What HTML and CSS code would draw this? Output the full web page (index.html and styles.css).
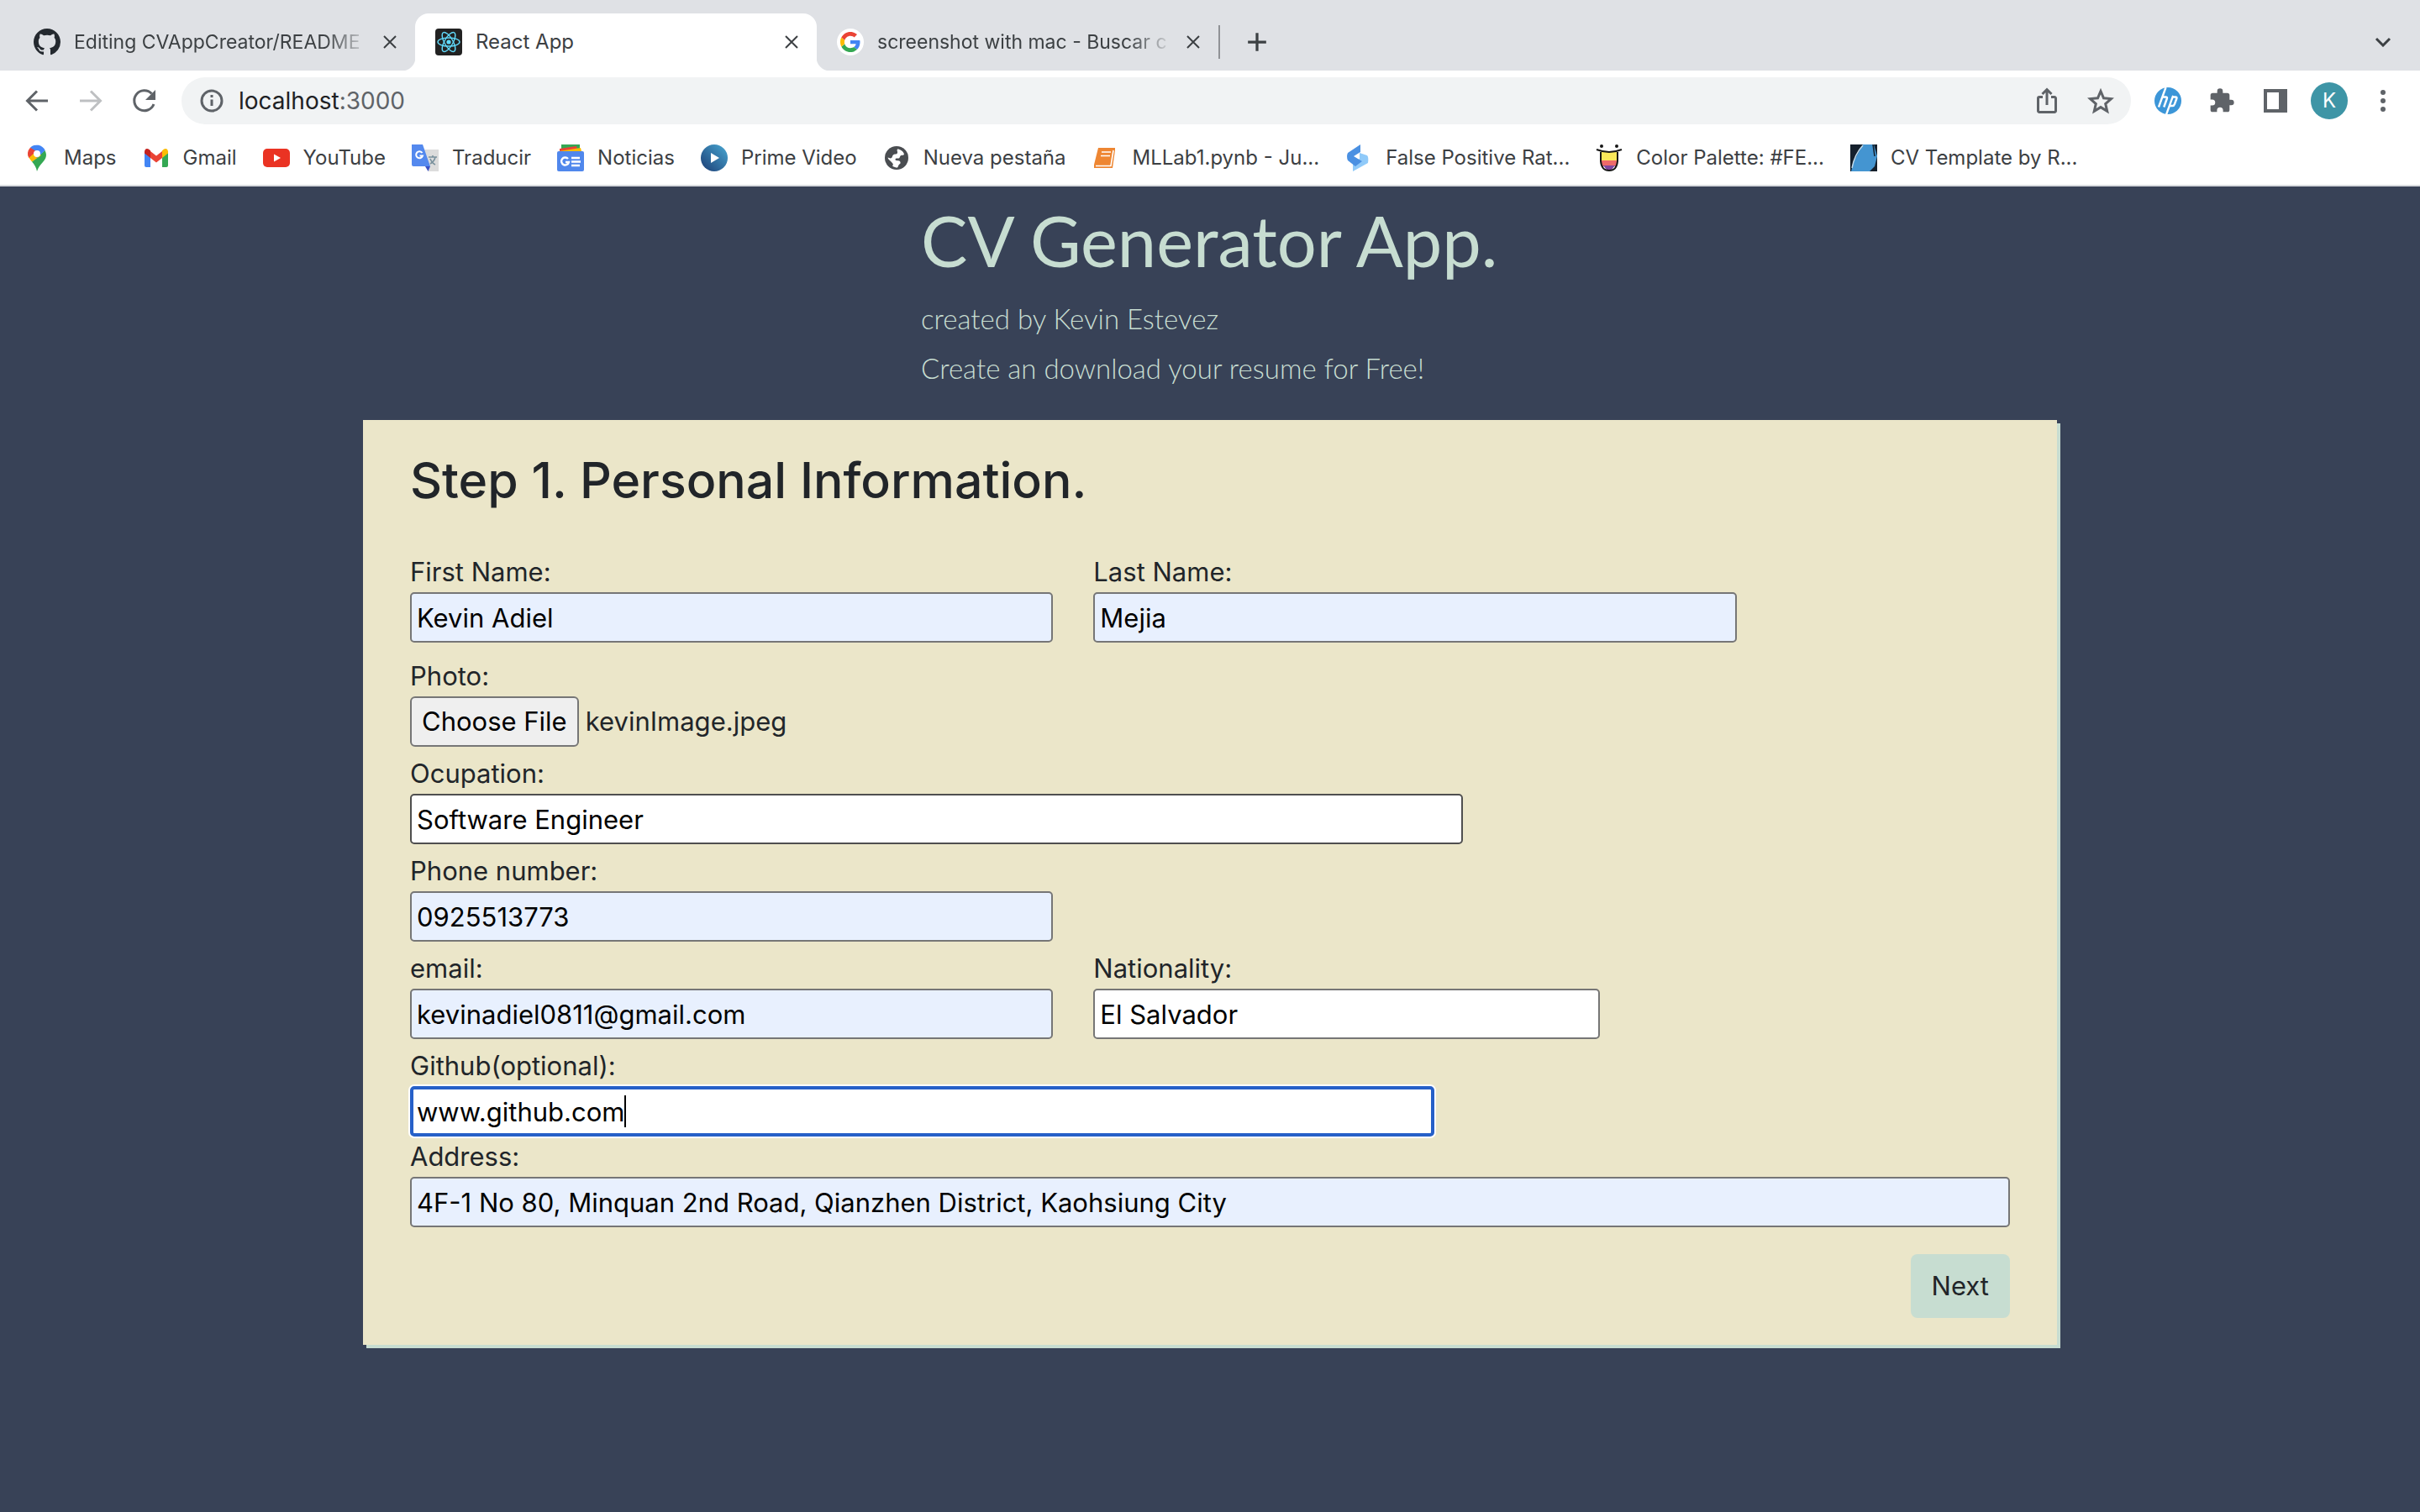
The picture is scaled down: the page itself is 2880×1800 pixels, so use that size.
FILE: index.html
```html
<!DOCTYPE html>
<html lang="en">
<head>
<meta charset="utf-8">
<title>React App</title>
<link rel="stylesheet" href="styles.css">
</head>
<body>
<div class="browser">
  <div class="tabstrip">
    <div class="tab">
      <svg class="icon" viewBox="0 0 16 16"><path fill="#24292f" d="M8 0C3.58 0 0 3.58 0 8c0 3.54 2.29 6.53 5.47 7.59.4.07.55-.17.55-.38 0-.19-.01-.82-.01-1.49-2.01.37-2.53-.49-2.69-.94-.09-.23-.48-.94-.82-1.13-.28-.15-.68-.52-.01-.53.63-.01 1.08.58 1.23.82.72 1.21 1.87.87 2.33.66.07-.52.28-.87.51-1.07-1.78-.2-3.64-.89-3.64-3.95 0-.87.31-1.59.82-2.15-.08-.2-.36-1.02.08-2.12 0 0 .67-.21 2.2.82.64-.18 1.32-.27 2-.27s1.36.09 2 .27c1.53-1.04 2.2-.82 2.2-.82.44 1.1.16 1.92.08 2.12.51.56.82 1.27.82 2.15 0 3.07-1.87 3.75-3.65 3.95.29.25.54.73.54 1.48 0 1.07-.01 1.93-.01 2.2 0 .21.15.46.55.38A8.01 8.01 0 0 0 16 8c0-4.42-3.58-8-8-8z"/></svg>
      <span class="tab-title tab-title-long">Editing CVAppCreator/README</span>
      <button class="tab-close" aria-label="Close tab"><svg viewBox="0 0 16 16"><path d="M1 1l14 14M15 1L1 15"/></svg></button>
    </div>
    <div class="tab tab-active">
      <svg class="icon" viewBox="0 0 32 32"><rect width="32" height="32" rx="4" fill="#222"/><g fill="none" stroke="#61dafb" stroke-width="1.4"><ellipse cx="16" cy="16" rx="13" ry="5"/><ellipse cx="16" cy="16" rx="13" ry="5" transform="rotate(60 16 16)"/><ellipse cx="16" cy="16" rx="13" ry="5" transform="rotate(120 16 16)"/></g><circle cx="16" cy="16" r="2.6" fill="#61dafb"/></svg>
      <span class="tab-title">React App</span>
      <button class="tab-close" aria-label="Close tab"><svg viewBox="0 0 16 16"><path d="M1 1l14 14M15 1L1 15"/></svg></button>
    </div>
    <div class="tab">
      <svg class="icon" viewBox="0 0 32 32"><circle cx="16" cy="16" r="16" fill="#fff"/><g transform="translate(4 4)"><path fill="#4285f4" d="M23.5 12.3c0-.9-.1-1.5-.3-2.2H12v4.1h6.600c-.1 1.100-.9 2.700-2.500 3.800l3.800 3C22.200 18.900 23.500 15.900 23.500 12.300z"/><path fill="#34a853" d="M12 24c3.200 0 5.900-1.100 7.900-2.900l-3.800-3c-1 .7-2.400 1.200-4.100 1.200-3.100 0-5.800-2.100-6.700-4.900l-3.900 3C3.400 21.300 7.400 24 12 24z"/><path fill="#fbbc05" d="M5.300 14.300c-.3-.7-.4-1.500-.4-2.300s.2-1.600.4-2.300l-4-3.100C.5 8.200 0 10.100 0 12s.5 3.800 1.300 5.400z"/><path fill="#ea4335" d="M12 4.700c2.200 0 3.700.9 4.600 1.700l3.400-3.300C17.900 1.200 15.200 0 12 0 7.400 0 3.400 2.700 1.300 6.600l4 3.100C6.200 6.900 8.900 4.700 12 4.700z"/></g></svg>
      <span class="tab-title tab-title-long">screenshot with mac - Buscar c</span>
      <button class="tab-close" aria-label="Close tab"><svg viewBox="0 0 16 16"><path d="M1 1l14 14M15 1L1 15"/></svg></button>
    </div>
    <button class="new-tab" aria-label="New tab"><svg viewBox="0 0 24 24"><path d="M12 2v20M2 12h20"/></svg></button>
    <button class="tab-search" aria-label="Search tabs"><svg viewBox="0 0 20 12"><path d="M2 2l8 8 8-8"/></svg></button>
  </div>

  <div class="toolbar">
    <button class="tool" aria-label="Back"><svg class="icon stroke" viewBox="0 0 32 32"><path d="M29 16H5M16 4.500L4.500 16 16 27.500"/></svg></button>
    <button class="tool tool-off" aria-label="Forward"><svg class="icon stroke" viewBox="0 0 32 32"><path d="M3 16h24M16 4.500L27.500 16 16 27.500"/></svg></button>
    <button class="tool" aria-label="Reload"><svg class="icon stroke" viewBox="0 0 32 32"><path d="M27 20A12 12 0 1 1 24.500 7.500"/><path fill="#5f6368" stroke="none" d="M29 3v12H17z"/></svg></button>
    <div class="omnibox">
      <svg class="icon stroke" viewBox="0 0 32 32"><circle cx="16" cy="16" r="12"/><path d="M16 14.500v7.500M16 9v3"/></svg>
      <span class="url">localhost<span class="url-port">:3000</span></span>
      <button class="tool" aria-label="Share"><svg class="icon stroke" viewBox="0 0 32 32"><path d="M11 11.500H7a1.500 1.500 0 0 0-1.500 1.500v15A1.500 1.500 0 0 0 7 29.500h18a1.500 1.500 0 0 0 1.500-1.500V13a1.500 1.500 0 0 0-1.500-1.500h-4M16 21V2.500M10.500 8L16 2.500 21.500 8"/></svg></button>
      <button class="tool" aria-label="Bookmark this tab"><svg class="icon stroke" viewBox="0 0 32 32"><path d="M16 4.500l3.500 8.300 9 .8-6.800 5.900 2 8.800-7.700-4.700-7.700 4.700 2-8.800-6.800-5.900 9-.8z"/></svg></button>
    </div>
    <button class="tool" aria-label="HP extension"><svg class="icon" viewBox="0 0 32 32"><circle cx="16" cy="16" r="16" fill="#3c96d8"/><g fill="none" stroke="#fff" stroke-width="2.400"><path d="M13.500 0L5 23.500M9 11.500h4.500q2 0 1.300 2L11.200 23.500M22.200 9.800L14 32.500M21.500 11.500H25q2 0 1.300 2l-2.400 6.500q-.7 2-2.600 2h-3"/></g></svg></button>
    <button class="tool" aria-label="Extensions"><svg class="icon" viewBox="0 0 24 24"><path fill="#5f6368" d="M20.500 11H19V7a2 2 0 0 0-2-2h-4V3.500a2.500 2.500 0 0 0-5 0V5H4a2 2 0 0 0-2 2v3.800h1.500a2.700 2.700 0 0 1 0 5.400H2V20a2 2 0 0 0 2 2h3.800v-1.500a2.700 2.700 0 0 1 5.400 0V22H17a2 2 0 0 0 2-2v-4h1.500a2.500 2.500 0 0 0 0-5z"/></svg></button>
    <button class="tool" aria-label="Side panel"><svg class="icon" viewBox="0 0 32 32"><path fill="#5f6368" fill-rule="evenodd" d="M2 2h28v28H2zM6 6v20h14V6z"/></svg></button>
    <button class="avatar" aria-label="Profile">K</button>
    <button class="tool" aria-label="Menu"><svg class="icon" viewBox="0 0 32 32" fill="#5f6368"><circle cx="16" cy="6" r="3"/><circle cx="16" cy="16" r="3"/><circle cx="16" cy="26" r="3"/></svg></button>
  </div>

  <nav class="bookmarks">
    <a href="#"><svg class="icon" viewBox="0 0 32 32"><path fill="#34a853" d="M16 32c-1-5-3-8-6-11.500L25.500 7c3 6 1 10-2.500 14-3 3.500-5.500 6-7 11z"/><path fill="#fbbc05" d="M10 20.500C8 18 5.500 15 5.200 11.500L14 6l7 7z"/><path fill="#4285f4" d="M8 3.800A11 11 0 0 1 25.700 7L16 16z"/><path fill="#ea4335" d="M8 3.800A11 11 0 0 0 6.300 16L15 8z"/><circle cx="16" cy="11" r="4" fill="#fff"/></svg>Maps</a>
    <a href="#"><svg class="icon" viewBox="0 0 32 32"><path fill="#4285f4" d="M2 8v17q0 2 2 2h5V12z"/><path fill="#34a853" d="M30 8v17q0 2-2 2h-5V12z"/><path fill="#ea4335" d="M9 8l7 5.500L23 8v8l-7 5.500L9 16z"/><path fill="#c5221f" d="M2 9c0-4 3-5 5.500-3L9 7.300V16l-7-5.500z"/><path fill="#fbbc04" d="M30 9c0-4-3-5-5.500-3L23 7.300V16l7-5.500z"/></svg>Gmail</a>
    <a href="#"><svg class="icon" viewBox="0 0 32 32"><rect y="5" width="32" height="22" rx="5" fill="#ea3323"/><path fill="#fff" d="M13 11.500v9l8-4.500z"/></svg>YouTube</a>
    <a href="#"><svg class="icon" viewBox="0 0 32 32"><path fill="#dcdcdc" d="M14 6h18v26H20z"/><path fill="#3a50c4" d="M16 26h6l-2.500 6z"/><path fill="#5489ee" d="M0 0h13l9 26H2q-2 0-2-2z"/><path fill="none" stroke="#fff" stroke-width="2" d="M12.500 10a4 4 0 1 0 .5 3.500H9.500"/><path fill="none" stroke="#78909c" stroke-width="1.600" d="M20 15h10M25 13v2M28 15q-1 5-6 8M22 17q2 5 6 7"/></svg>Traducir</a>
    <a href="#"><svg class="icon" viewBox="0 0 32 32"><path fill="#34a853" d="M5 0h22v9H5z"/><path fill="#ea4335" d="M3 5l20-3 2 8H3z"/><path fill="#fbbc04" d="M2 8l26-4 2 8H2z"/><rect y="8" width="32" height="24" rx="2" fill="#5087ec"/><path fill="none" stroke="#fff" stroke-width="2.400" d="M13 17a4.500 4.500 0 1 0 1 4h-4M17 16h10M17 20.500h11M17 25h10"/></svg>Noticias</a>
    <a href="#"><svg class="icon" viewBox="0 0 32 32"><defs><linearGradient id="prime" x1="1" y1="0" x2="0" y2="1"><stop offset="0" stop-color="#49a8d3"/><stop offset="1" stop-color="#1b3c73"/></linearGradient></defs><circle cx="16" cy="16" r="16" fill="url(#prime)"/><path fill="#fff" d="M12 10v12l10-6z"/></svg>Prime Video</a>
    <a href="#"><svg class="icon" viewBox="0 0 32 32"><circle cx="16" cy="16" r="14" fill="#4a4d51"/><path fill="#fff" d="M17 5.500c3 0 7 2.500 8 6-1 2-2 1-3.500 1.500-2 .5-1 3-3 3.500-2 .3-4-.5-4 1.500 0 2 5 0 6 3 .6 2-1 2-2 3.500-.6 1-.5 2-1.500 3-2 0-4-.5-6-2 2-2 0-3-1-4.500-1.500-2-4-3-4.500-5.500 2 .5 3 1.500 4.500.5 1.500-1 .5-3 2.500-4s4 0 4.500-2-1-2 0-4.500z"/></svg>Nueva pestaña</a>
    <a href="#"><svg class="icon" viewBox="0 0 32 32"><path fill="#ee8632" d="M7 4h20v3l-3 21H2v-4z"/><path fill="none" stroke="#fff" stroke-width="1.600" d="M11 9h11M10 13.500h11M4 25.500h18L25 7"/></svg>MLLab1.pynb - Ju...</a>
    <a href="#"><svg class="icon" viewBox="0 0 32 32"><path fill="#90caf9" d="M17 10l9 3q2 2 1 9L9 32V22l8-5z"/><path fill="#4a90e2" d="M18 0v9l-8 5 10 6-8 6-9-7q-2-5 0-9z"/></svg>False Positive Rat...</a>
    <a href="#"><svg class="icon" viewBox="0 0 32 32"><path fill="#f9e85a" d="M6 9h20v11H6z"/><path fill="#ee6a6a" d="M6 19h20l-2 7H8z"/><path fill="#8048a0" d="M9 25h14l-4 5h-6z"/><path fill="none" stroke="#161616" stroke-width="2" d="M1 6q15 6 30 0M6 9v11q1 11 10 11t10-11V9"/><circle cx="7" cy="2" r="2" fill="#161616"/><circle cx="25" cy="2" r="2" fill="#161616"/></svg>Color Palette: #FE...</a>
    <a href="#"><svg class="icon" viewBox="0 0 32 32"><rect width="32" height="32" fill="#15202c"/><path fill="#4495d1" d="M15 0h13l4 14-3 12-6 6H1L4 20z"/><path fill="none" stroke="#c4dcec" stroke-width="1.500" d="M15 1Q5 12 2 28"/><path fill="none" stroke="#15202c" stroke-width="1.500" d="M27 0l2 14"/></svg>CV Template by R...</a>
  </nav>
</div>

<header class="intro">
  <h1>CV Generator App.</h1>
  <p>created by Kevin Estevez</p>
  <p>Create an download your resume for Free!</p>
</header>

<main>
  <form class="card">
    <h2>Step 1. Personal Information.</h2>
    <div class="fields">
      <div class="field half name"><label for="first">First Name:</label><input class="filled" id="first" type="text" value="Kevin Adiel"></div>
      <div class="field half name"><label for="last">Last Name:</label><input class="filled" id="last" type="text" value="Mejia"></div>
      <div class="field full"><label for="photo">Photo:</label>
        <div class="file"><button type="button" id="photo">Choose File</button><span>kevinImage.jpeg</span></div></div>
      <div class="field wide"><label for="job">Ocupation:</label><input class="hovered" id="job" type="text" value="Software Engineer"></div>
      <div class="field half first"><label for="phone">Phone number:</label><input class="filled" id="phone" type="text" value="0925513773"></div>
      <div class="field half first"><label for="email">email:</label><input class="filled" id="email" type="text" value="kevinadiel0811@gmail.com"></div>
      <div class="field third"><label for="nation">Nationality:</label><input id="nation" type="text" value="El Salvador"></div>
      <div class="field full github"><label for="github">Github(optional):</label>
        <div class="active-box"><input class="active" id="github" type="text" value="www.github.com"><span class="caret"></span></div></div>
      <div class="field full"><label for="address">Address:</label><input class="filled" id="address" type="text" value="4F-1 No 80, Minquan 2nd Road, Qianzhen District, Kaohsiung City"></div>
    </div>
    <div class="actions"><button class="next" type="button">Next</button></div>
  </form>
</main>
</body>
</html>
```
FILE: styles.css
```css
* { box-sizing: border-box; }

body {
  margin: 0;
  min-height: 100vh;
  background: #384257;
  color: #212529;
  font: 31px/48px Inter, "Liberation Sans", sans-serif;
}

button, input { font: inherit; margin: 0; }

/* Browser window */
.browser {
  background: #fff;
  border-bottom: 2px solid #d9dbdf;
  color: #3c4043;
  font-size: 24px;
  line-height: 32px;
}

.browser button {
  display: flex;
  align-items: center;
  justify-content: center;
  padding: 0;
  border: 0;
  background: none;
}

.icon { display: block; flex: none; width: 32px; height: 32px; }

.stroke { fill: none; stroke: #5f6368; stroke-width: 3; }

.tabstrip {
  display: flex;
  height: 84px;
  padding: 16px 28px 0 16px;
  background: #dfe1e5;
}

.tab {
  position: relative;
  display: flex;
  align-items: center;
  width: 478px;
  padding: 0 14px 0 24px;
  border-radius: 16px 16px 0 0;
}

.tab-active { background: #fff; }

.tab-active::before,
.tab-active::after {
  content: "";
  position: absolute;
  bottom: 0;
  width: 16px;
  height: 16px;
}

.tab-active::before {
  left: -16px;
  background: radial-gradient(circle at 0 0, #dfe1e5 16px, #fff 17px);
}

.tab-active::after {
  right: -16px;
  background: radial-gradient(circle at 100% 0, #dfe1e5 16px, #fff 17px);
}

.tab-title {
  flex: 1;
  margin: 0 8px 0 16px;
  white-space: nowrap;
}

.tab-title-long {
  font-size: 23px;
  mask-image: linear-gradient(to right, #000 85%, transparent);
}

.tab-close { width: 32px; height: 32px; }
.tab-close svg { width: 16px; }

.tabstrip button svg { fill: none; stroke: #3c4043; stroke-width: 2; }
.tabstrip .new-tab { width: 90px; margin: 14px 0; border-left: 2px solid #909296; }
.tabstrip .new-tab svg { width: 26px; stroke-width: 3; }
.tab-search { width: 32px; margin-left: auto; }
.tabstrip .tab-search svg { width: 20px; stroke-width: 3; }

.toolbar {
  display: flex;
  align-items: center;
  gap: 32px;
  padding: 8px 28px;
}

.tool-off { opacity: 0.4; }

.omnibox {
  display: flex;
  flex: 1;
  align-items: center;
  gap: 32px;
  height: 56px;
  margin: 0 -4px;
  padding: 0 20px;
  border-radius: 28px;
  background: #f1f3f4;
}

.url {
  flex: 1;
  margin-left: -16px;
  color: #202124;
  font-size: 28px;
}

.url-port { color: #5f6368; }

.browser .avatar {
  width: 44px;
  height: 44px;
  margin: 0 -6px;
  border-radius: 50%;
  background: #3e95a6;
  color: #fff;
}

.bookmarks {
  display: flex;
  gap: 31px;
  padding: 16px 28px;
}

.bookmarks a {
  display: flex;
  gap: 16px;
  color: inherit;
  text-decoration: none;
  white-space: nowrap;
}

/* Page heading */
.intro {
  width: 688px;
  margin: 0 auto;
  padding: 16px 0 27px;
  color: #c7ddd1;
  font-family: Papyrus, Lato, sans-serif;
  font-size: 33px;
  font-weight: 300;
}

.intro h1 {
  margin: 0 0 21px;
  font-size: 83px;
  font-weight: 400;
  line-height: 96px;
  white-space: nowrap;
}

.intro p { margin: 0 0 11px; white-space: nowrap; }

/* Form card */
.card {
  width: 70%;
  margin: 0 auto;
  padding: 32px 56px;
  background: #ebe6c9;
  box-shadow: 4px 4px 0 #c7ddd1;
}

.card h2 {
  margin: 0 0 45px;
  font-size: 59px;
  font-weight: 500;
  line-height: 80px;
}

.fields {
  display: grid;
  grid-template-columns: repeat(12, 1fr);
  gap: 8px 48px;
}

.field { display: flex; flex-direction: column; }
.half { grid-column: span 5; }
.third { grid-column: span 4; }
.wide { grid-column: 1 / span 8; }
.first { grid-column: 1 / span 5; }
.full { grid-column: 1 / -1; }
.name { margin-bottom: 8px; }
.github { margin-bottom: -8px; }

.fields input {
  width: 100%;
  height: 60px;
  padding: 0 6px;
  border: 2px solid #767676;
  border-radius: 5px;
  background: #fff;
  color: #000;
}

.fields .filled { background: #e8f0fe; }
.fields .hovered { border-color: #4f4f4f; }

.active-box { position: relative; width: 64%; }

.fields .active {
  display: block;
  padding: 0 4px;
  border: 4px solid #2660c8;
  box-shadow: 0 0 0 2px #fff;
  outline: none;
}

.caret {
  position: absolute;
  top: 11px;
  left: 255px;
  width: 2px;
  height: 38px;
  background: #000;
}

.file { display: flex; align-items: center; gap: 8px; }

.file button {
  height: 60px;
  padding: 0 12px;
  border: 2px solid #767676;
  border-radius: 6px;
  background: #efefef;
  color: #000;
}

.actions { display: flex; justify-content: flex-end; margin-top: 32px; }

.next {
  height: 76px;
  padding: 0 25px;
  border: 0;
  border-radius: 8px;
  background: #c7ddd1;
  color: #212529;
}
```
